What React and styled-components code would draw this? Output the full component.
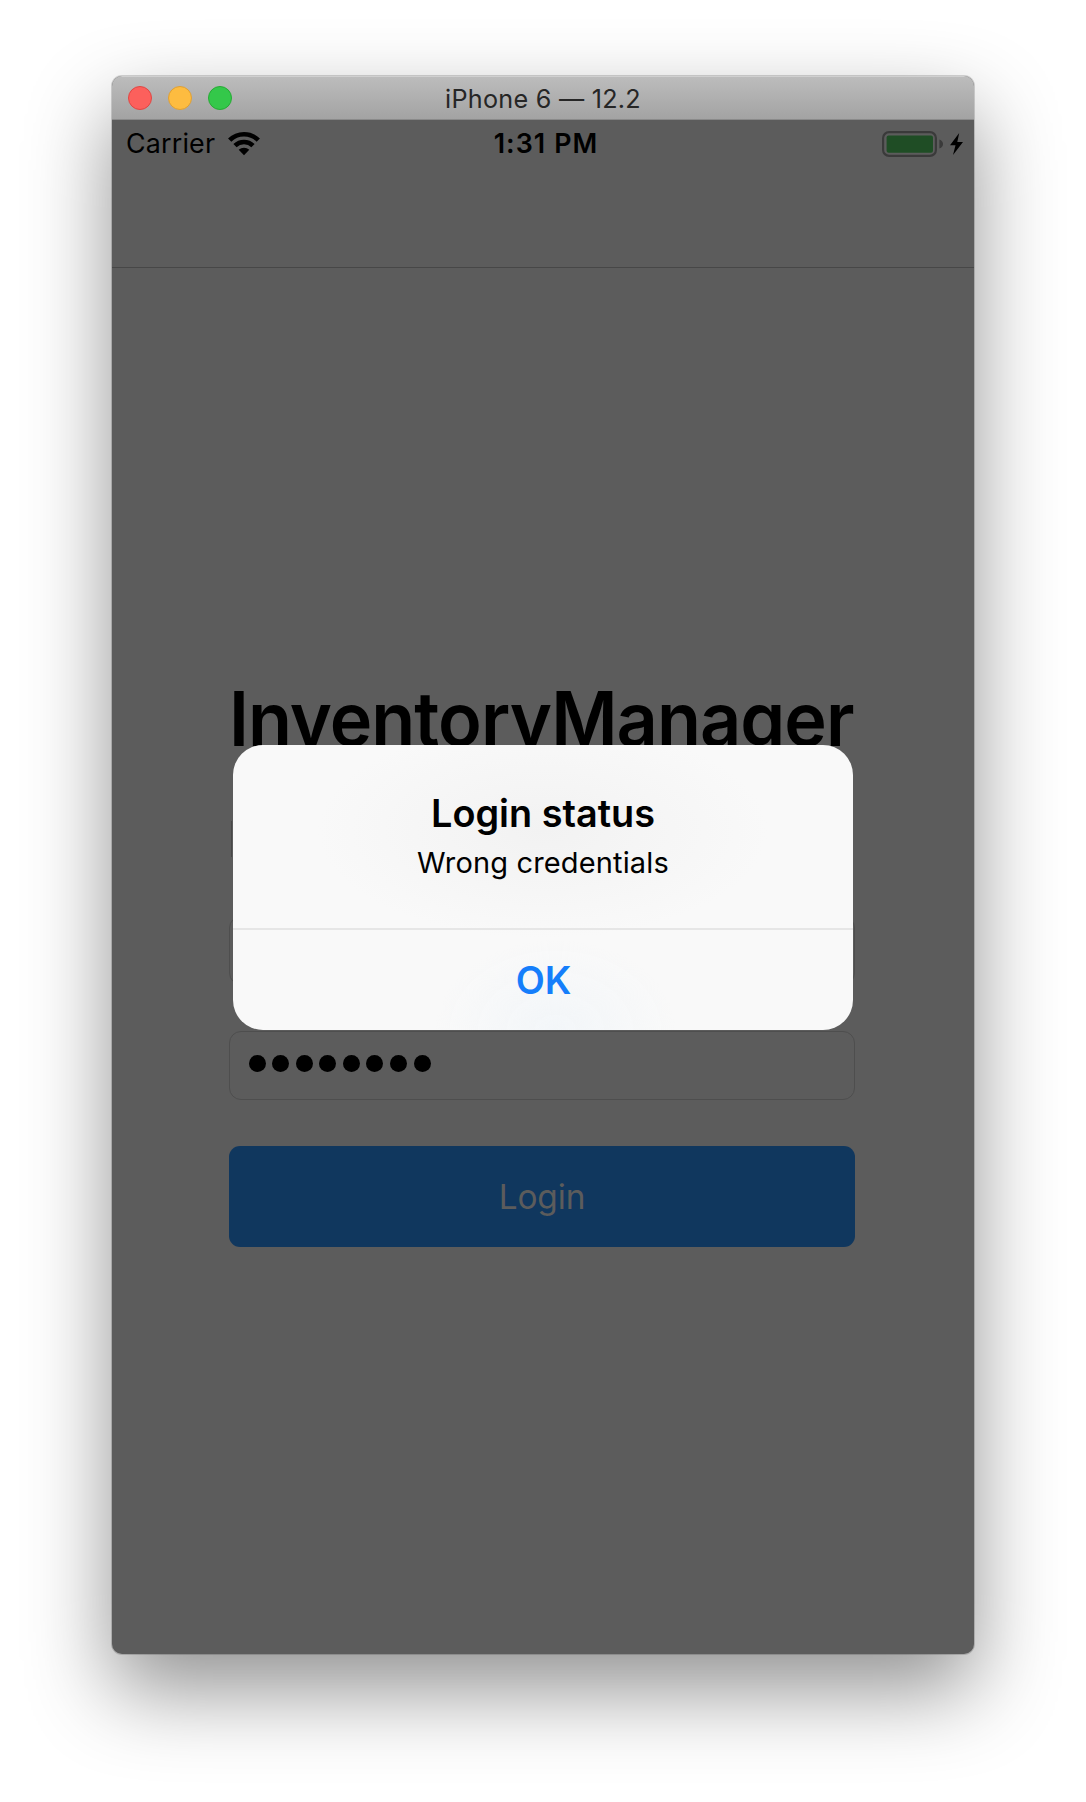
import React from "react";
import styled, { createGlobalStyle } from "styled-components";

const GlobalStyle = createGlobalStyle`
  *, *::before, *::after { box-sizing: border-box; }
  body { margin: 0; background: #fff; font-family: Inter, "Liberation Sans", sans-serif; color: #000; }
`;

const Desktop = styled.div`
  height: 1802px;
  padding: 76px 112px 0;
  overflow: hidden;
`;

const Window = styled.main`
  width: 862px;
  height: 1578px;
  display: flex;
  flex-direction: column;
  border-radius: 10px;
  overflow: hidden;
  background: #5c5c5c;
  box-shadow: 0 0 0 1px rgba(0, 0, 0, 0.16), 0 36px 84px rgba(0, 0, 0, 0.43);
`;

const TitleBar = styled.header`
  flex: none;
  height: 44px;
  display: grid;
  grid-template-columns: 1fr auto 1fr;
  align-items: center;
  padding: 0 16px;
  background: linear-gradient(#bcbcbc, #a3a3a3);
  border-top: 1px solid #d0d0d0;
  border-bottom: 1px solid #8a8a8a;
`;

const Lights = styled.div`
  display: flex;
  gap: 16px;
`;

const Light = styled.span`
  width: 24px;
  height: 24px;
  border-radius: 50%;
  background: ${(p) => p.$fill};
  border: 1px solid ${(p) => p.$edge};
`;

const Text = styled.span`
  font-size: ${(p) => p.$size}px;
  font-weight: ${(p) => p.$weight || 400};
  letter-spacing: ${(p) => p.$track || 0}px;
  color: ${(p) => p.$color || "#000"};
  line-height: 1.2;
  padding-top: ${(p) => p.$drop || 0}px;
  padding-left: ${(p) => p.$indent || 0}px;
  white-space: nowrap;
`;

const Screen = styled.section`
  flex: 1;
  position: relative;
  display: flex;
  flex-direction: column;
`;

const StatusBar = styled.div`
  height: 47px;
  display: grid;
  grid-template-columns: 1fr auto 1fr;
  align-items: center;
  padding: 0 11px 0 14px;
`;

const StatusGroup = styled.div`
  display: flex;
  align-items: center;
  justify-content: ${(p) => (p.$end ? "flex-end" : "flex-start")};
  gap: ${(p) => p.$gap}px;
`;

const NavBar = styled.div`
  height: 101px;
  border-bottom: 1px solid #474747;
`;

const Form = styled.div`
  width: 626px;
  margin: 404px 0 0 117px;
  display: flex;
  flex-direction: column;
`;

const AppName = styled.h1`
  margin: 0;
  height: 94px;
  font-size: 75px;
  font-weight: 600;
  line-height: 93px;
  letter-spacing: -1px;
  white-space: nowrap;
  transform: scaleX(0.959);
  transform-origin: left;
`;

const Subheading = styled.div`
  height: 36px;
  margin: 55px 0 59px 2px;
  border-left: 1px solid #484848;
`;

const Field = styled.div`
  height: 69px;
  padding: 0 0 5px 18.5px;
  margin-bottom: 46px;
  display: flex;
  align-items: center;
  gap: 6.6px;
  border: 1.5px solid #4e4e4e;
  border-radius: 12px;
`;

const Dot = styled.span`
  width: 17px;
  height: 17px;
  border-radius: 50%;
  background: #000;
`;

const LoginButton = styled.button`
  height: 101px;
  padding: 2px 0 0;
  border: 0;
  border-radius: 11px;
  background: #10375e;
  font-family: inherit;
`;

const Alert = styled.div`
  position: absolute;
  left: 121px;
  top: 624.6px;
  width: 620px;
  height: 285.8px;
  display: flex;
  flex-direction: column;
  border-radius: 30px;
  overflow: hidden;
  background:
    radial-gradient(ellipse 120px 90px at 52% 100%, rgba(240, 245, 249, 0.7), transparent),
    radial-gradient(ellipse 250px 120px at 50% 30%, #f2f2f2, #f9f9f9 90%);
`;

const AlertBody = styled.div`
  height: 185.4px;
  padding-top: 46.4px;
  display: flex;
  flex-direction: column;
  align-items: center;
  gap: 10px;
  border-bottom: 2px solid #e6e6e6;
`;

const AlertAction = styled.button`
  flex: 1;
  padding: 1px 0 0 1px;
  border: 0;
  background: transparent;
  font-family: inherit;
`;

const Wifi = () => (
  <svg width="32" height="25" viewBox="0 0 32 25" fill="none" stroke="#000" strokeWidth="4.6">
    <path d="M1.7 9.2C9.5 1.2 22.5 1.2 30.3 9.2" />
    <path d="M7 14.7C12 9.8 20 9.8 25 14.7" />
    <path d="M16 24.2L10.7 18.8C13.7 16 18.3 16 21.3 18.8Z" fill="#000" stroke="none" />
  </svg>
);

const Battery = () => (
  <svg width="62" height="26" viewBox="0 0 62 26">
    <rect x="1.1" y="1.1" width="52.8" height="23.8" rx="6" fill="none" stroke="#3a3a3a" strokeWidth="2.2" />
    <rect x="4.6" y="4.4" width="46.4" height="17.4" rx="2" fill="#1f4d25" />
    <path d="M57.4 8.5Q61 10 61 13T57.4 17.5Z" fill="#3a3a3a" />
  </svg>
);

const Bolt = () => (
  <svg width="13" height="22" viewBox="0 0 13 22">
    <path d="M9.2 0L0 12.2H5.5L3 22L13 9H7.3Z" />
  </svg>
);

export default function App() {
  return (
    <>
      <GlobalStyle />
      <Desktop>
        <Window>
          <TitleBar>
            <Lights>
              <Light $fill="#fc605c" $edge="#df4744" />
              <Light $fill="#fdbc40" $edge="#de9f34" />
              <Light $fill="#34c84a" $edge="#27aa35" />
            </Lights>
            <Text $size={25.2} $color="#262626" $track={0.25} $drop={1.5}>iPhone 6 — 12.2</Text>
          </TitleBar>
          <Screen>
            <StatusBar>
              <StatusGroup $gap={13}>
                <Text $size={26.8} $track={0.2}>Carrier</Text>
                <Wifi />
              </StatusGroup>
              <Text $size={26.8} $weight={600} $track={1.1} $indent={3}>1:31 PM</Text>
              <StatusGroup $gap={6} $end>
                <Battery />
                <Bolt />
              </StatusGroup>
            </StatusBar>
            <NavBar />
            <Form>
              <AppName>InventoryManager</AppName>
              <Subheading />
              <Field />
              <Field>
                {Array.from({ length: 8 }, (_, i) => <Dot key={i} />)}
              </Field>
              <LoginButton>
                <Text $size={33.4} $color="#5c5c5c" $track={-0.1}>Login</Text>
              </LoginButton>
            </Form>
            <Alert role="alertdialog">
              <AlertBody>
                <Text $size={37.8} $weight={600}>Login status</Text>
                <Text $size={29} $track={0.15}>Wrong credentials</Text>
              </AlertBody>
              <AlertAction>
                <Text $size={37.8} $weight={600} $color="#157efb">OK</Text>
              </AlertAction>
            </Alert>
          </Screen>
        </Window>
      </Desktop>
    </>
  );
}
